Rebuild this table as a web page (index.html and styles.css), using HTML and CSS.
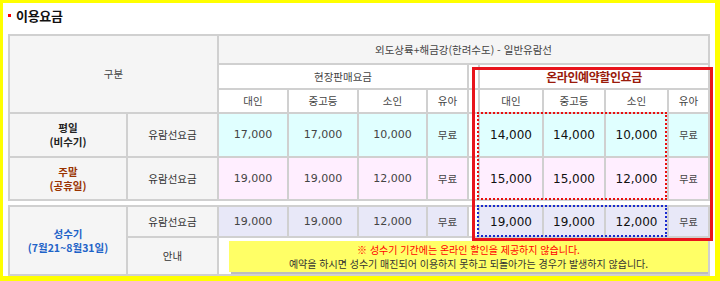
FILE: index.html
```html
<!DOCTYPE html>
<html lang="ko">
<head>
<meta charset="utf-8">
<title>이용요금</title>
<link rel="stylesheet" href="styles.css">
</head>
<body>
<div class="frame">
  <h2 class="title"><span class="bullet"></span>이용요금</h2>

  <table class="fare">
    <colgroup>
      <col class="c1"><col class="c2"><col class="c3"><col class="c4"><col class="c5"><col class="c6"><col class="c7"><col class="c8"><col class="c9"><col class="c10"><col class="c11">
    </colgroup>
    <tr class="h1">
      <th colspan="2" rowspan="3" class="gubun">구분</th>
      <th colspan="9" class="route">외도상륙+해금강(한려수도) - 일반유람선</th>
    </tr>
    <tr class="h2">
      <th colspan="4">현장판매요금</th>
      <th class="sp"></th>
      <th colspan="4" class="online">온라인예약할인요금</th>
    </tr>
    <tr class="h3">
      <th>대인</th><th>중고등</th><th>소인</th><th>유아</th>
      <th class="sp"></th>
      <th>대인</th><th>중고등</th><th>소인</th><th>유아</th>
    </tr>
    <tr class="row wk">
      <th class="label">평일<br>(비수기)</th>
      <th class="kind">유람선요금</th>
      <td class="num">17,000</td><td class="num">17,000</td><td class="num">10,000</td><td>무료</td>
      <td class="sp"></td>
      <td class="big">14,000</td><td class="big">14,000</td><td class="big">10,000</td><td class="free">무료</td>
    </tr>
    <tr class="row we">
      <th class="label holiday">주말<br>(공휴일)</th>
      <th class="kind">유람선요금</th>
      <td class="num">19,000</td><td class="num">19,000</td><td class="num">12,000</td><td>무료</td>
      <td class="sp"></td>
      <td class="big">15,000</td><td class="big">15,000</td><td class="big">12,000</td><td class="free">무료</td>
    </tr>
  </table>

  <table class="fare peak">
    <colgroup>
      <col class="c1"><col class="c2"><col class="c3"><col class="c4"><col class="c5"><col class="c6"><col class="c7"><col class="c8"><col class="c9"><col class="c10"><col class="c11">
    </colgroup>
    <tr class="row pk">
      <th rowspan="2" class="label season">성수기<br>(7월21~8월31일)</th>
      <th class="kind">유람선요금</th>
      <td class="num">19,000</td><td class="num">19,000</td><td class="num">12,000</td><td>무료</td>
      <td class="sp"></td>
      <td class="big">19,000</td><td class="big">19,000</td><td class="big">12,000</td><td class="free">무료</td>
    </tr>
    <tr class="info">
      <th class="kind">안내</th>
      <td colspan="9" class="info-cell">
        <div class="notice">
          <p class="warn">※ 성수기 기간에는 온라인 할인을 제공하지 않습니다.</p>
          <p>예약을 하시면 성수기 매진되어 이용하지 못하고 되돌아가는 경우가 발생하지 않습니다.</p>
        </div>
      </td>
    </tr>
  </table>

  <div class="mark red-box"></div>
  <div class="mark red-dots"></div>
  <div class="mark blue-dots"></div>
</div>
</body>
</html>
```

FILE: styles.css
```css
* { box-sizing: border-box; }
html, body { margin: 0; padding: 0; background: #fff; }
body { width: 720px; height: 281px; overflow: hidden; }

.frame {
  position: relative;
  width: 720px;
  height: 281px;
  border-style: solid;
  border-color: #ffff00;
  border-width: 3px 5px 5px 3px;
  padding-left: 5px;
  background: #fff;
  font-family: "Noto Sans CJK KR", sans-serif;
  font-size: 10.5px;
  color: #333;
}

.title {
  display: flex;
  align-items: center;
  gap: 5px;
  height: 25px;
  margin: 0 0 6px;
  font-size: 13px;
  font-weight: bold;
  color: #111;
  letter-spacing: -0.3px;
}
.bullet {
  width: 3px;
  height: 3px;
  background: #ff0000;
}

.fare {
  border-collapse: collapse;
  table-layout: fixed;
  width: 702px;
}
.peak { margin-top: 4px; }

.c1 { width: 118px; }
.c2 { width: 91px; }
.c3 { width: 70px; }
.c4 { width: 70px; }
.c5 { width: 69px; }
.c6 { width: 41px; }
.c7 { width: 11px; }
.c8 { width: 64px; }
.c9 { width: 62px; }
.c10 { width: 63px; }
.c11 { width: 41px; }

.fare th, .fare td {
  border: 2px solid #d0d0d0;
  padding: 0;
  text-align: center;
  vertical-align: middle;
  font-weight: normal;
  color: #444;
  line-height: 14px;
}

.h1 { height: 29px; }
.h2 { height: 25px; }
.h3 { height: 24px; }
.wk { height: 44px; }
.we { height: 43px; }
.pk { height: 31px; }
.info { height: 38px; }

.gubun, .route { background: #f5f5f5; }
.gubun { color: #333; }
.h2 th, .h3 th { background: #fff; }

.online {
  font-size: 12px;
  font-weight: bold !important;
  color: #9a1a0a !important;
  letter-spacing: -0.4px;
}

.label {
  background: #f5f5f5;
  font-weight: bold !important;
  color: #222 !important;
}
.holiday { color: #993300 !important; }
.season { color: #1e63c8 !important; }
.kind { background: #f5f5f5; color: #333 !important; }

.wk td { background: #e0ffff; }
.we td { background: #ffeeff; }
.pk td { background: #e8e8f8; }
.row td.sp { background: #fff; }

.num {
  font-family: "DejaVu Sans", sans-serif;
  font-size: 11px;
  color: #444 !important;
}
.big {
  font-family: "DejaVu Sans", sans-serif;
  font-size: 12px;
  font-weight: bold;
  color: #111 !important;
}
.free { font-size: 10px; }

.info-cell {
  padding: 3px 0 2px 10px !important;
  background: #fff;
}
.notice {
  height: 31px;
  padding-top: 2px;
  background: #ffff66;
  box-shadow: 2px 2px 0 #bdbdbd;
  font-size: 10px;
  line-height: 14px;
  text-align: center;
  color: #333;
}
.notice p { margin: 0; }
.notice .warn { color: #ff0000; }

.mark { position: absolute; }
.red-box {
  left: 469px;
  top: 64px;
  width: 241px;
  height: 174px;
  border: 3px solid #e8141c;
}
.red-dots {
  left: 474px;
  top: 109px;
  width: 190px;
  height: 88px;
  border: 2px dotted #e81010;
}
.blue-dots {
  left: 474px;
  top: 202px;
  width: 190px;
  height: 32px;
  border: 2px dotted #1a2ad0;
}
```
